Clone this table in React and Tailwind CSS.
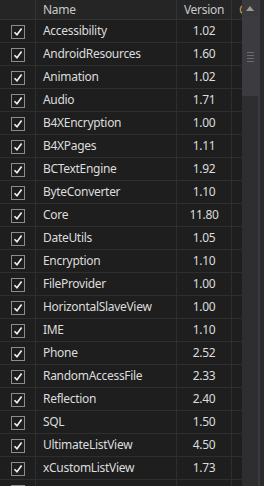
import React from "react";

const libs = [
  ["Accessibility", "1.02"],
  ["AndroidResources", "1.60"],
  ["Animation", "1.02"],
  ["Audio", "1.71"],
  ["B4XEncryption", "1.00"],
  ["B4XPages", "1.11"],
  ["BCTextEngine", "1.92"],
  ["ByteConverter", "1.10"],
  ["Core", "11.80"],
  ["DateUtils", "1.05"],
  ["Encryption", "1.10"],
  ["FileProvider", "1.00"],
  ["HorizontalSlaveView", "1.00"],
  ["IME", "1.10"],
  ["Phone", "2.52"],
  ["RandomAccessFile", "2.33"],
  ["Reflection", "2.40"],
  ["SQL", "1.50"],
  ["UltimateListView", "4.50"],
  ["xCustomListView", "1.73"],
  ["", ""],
];

const CheckBox = () => (
  <div className="w-[14px] h-[14px] border border-[#8c8c8c] flex items-center justify-center">
    <svg width="10" height="10" viewBox="0 0 10 10">
      <polyline points="1.5,5.2 4,7.8 8.6,1.6" fill="none" stroke="#f2f2f2" strokeWidth="1.6" />
    </svg>
  </div>
);

const App = () => {
  return (
    <div
      className="w-[264px] h-[486px] overflow-hidden flex bg-[#1e1e1e] text-[12px] tracking-[-0.3px] text-[#dcdcdc]"
      style={{ fontFamily: '"Noto Sans", "Open Sans", sans-serif' }}
    >
      <div className="w-[242px] flex flex-col">
        {/* header */}
        <div className="h-[20px] shrink-0 flex border-b border-[#333333] bg-[#252526] text-[#c8c8c8]">
          <div className="w-[36px] border-r border-[#333333]" />
          <div className="w-[141px] border-r border-[#333333] pl-[7px] flex items-center">Name</div>
          <div className="w-[55px] border-r border-[#333333] flex items-center justify-center">Version</div>
          <div className="flex-1 overflow-hidden pl-[7px] flex items-center text-[#c89a5a]">C</div>
        </div>
        {libs.map(([name, ver], i) => (
          <div key={i} className="h-[23px] shrink-0 flex border-b border-[#2e2e2e]">
            <div className="w-[36px] border-r border-[#2e2e2e] flex items-center justify-center pt-[1px]">
              <CheckBox />
            </div>
            <div className="w-[141px] border-r border-[#2e2e2e] pl-[7px] flex items-center whitespace-nowrap overflow-hidden">
              {name}
            </div>
            <div className="w-[55px] border-r border-[#2e2e2e] flex items-center justify-center">{ver}</div>
            <div className="flex-1" />
          </div>
        ))}
      </div>
      {/* scrollbar */}
      <div className="w-[16px] flex flex-col bg-[#2e2e31]">
        <div className="h-[17px] bg-[#3a3a3d] flex items-center justify-center">
          <svg width="8" height="5" viewBox="0 0 8 5">
            <polygon points="0,5 4,0 8,5" fill="#9a9a9a" />
          </svg>
        </div>
        <div className="h-[79px] bg-[#3c3c40] flex flex-col items-center justify-center gap-[2px]">
          <div className="w-[7px] h-[1px] bg-[#6a6a6e]" />
          <div className="w-[7px] h-[1px] bg-[#6a6a6e]" />
          <div className="w-[7px] h-[1px] bg-[#6a6a6e]" />
          <div className="w-[7px] h-[1px] bg-[#6a6a6e]" />
        </div>
      </div>
      <div className="w-[2px] bg-[#3c3c40]" />
      <div className="flex-1 bg-[#2a2a2d]" />
    </div>
  );
};

export default App;
